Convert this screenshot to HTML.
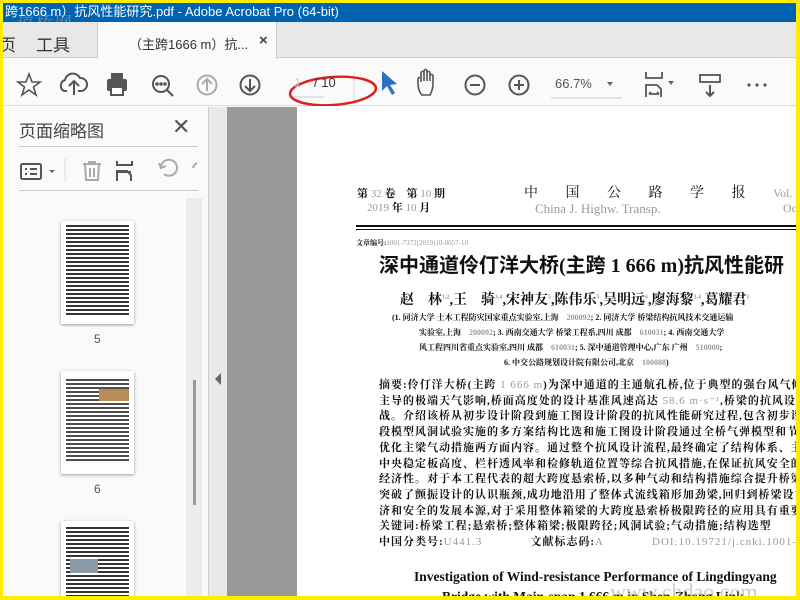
<!DOCTYPE html><html><head><meta charset="utf-8"><style>
*{margin:0;padding:0;box-sizing:border-box}
body{width:800px;height:600px;overflow:hidden;background:#ffec00;position:relative;font-family:"Liberation Sans","Noto Sans CJK SC",sans-serif}
.a{position:absolute}
.s{font-family:"Liberation Serif","Noto Serif CJK SC",serif;white-space:nowrap;color:#111}
.g{color:#999}
</style></head><body>
<div class="a" style="left:3px;top:3px;width:793px;height:593px;background:#fafafa;overflow:hidden">
<div class="a" style="left:0;top:0;width:793px;height:19px;background:#0063b1;color:#fff;font-size:13px;line-height:17px;padding-left:2px;white-space:nowrap">跨1666 m）抗风性能研究.pdf - Adobe Acrobat Pro (64-bit)</div>
<div class="a" style="left:14px;top:6px;font-size:17px;color:#8aa;opacity:.7;letter-spacing:2px;font-family:'Noto Serif CJK SC',serif">道桥网</div>
<div class="a" style="left:0;top:19px;width:793px;height:36px;background:#e8e8e8;border-bottom:1px solid #ccc"></div>
<div class="a" style="left:-4px;top:28px;font-size:17px;color:#333">页</div>
<div class="a" style="left:33px;top:28px;font-size:17px;color:#333">工具</div>
<div class="a" style="left:94px;top:19px;width:180px;height:37px;background:#fafafa;border-left:1px solid #ccc;border-right:1px solid #ccc"></div>
<div class="a" style="left:126px;top:31px;font-size:13px;color:#333;white-space:nowrap">（主跨1666 m）抗...</div>
<div class="a" style="left:256px;top:29px;font-size:15px;color:#444;font-weight:bold">×</div>
<div class="a" style="left:0;top:56px;width:793px;height:47px;background:#fafafa;border-bottom:1px solid #ddd"></div>
<svg class="a" style="left:0;top:56px" width="793" height="47" fill="none" stroke="#555" stroke-width="2">
<path d="M26 15 l3 8 h8 l-6.5 5 2.5 8 -7 -5 -7 5 2.5 -8 -6.5 -5 h8z" stroke-width="1.6"/>
<path d="M64 32 h-3 a6 6 0 0 1 1 -11 a8 8 0 0 1 15 -2 a6 6 0 0 1 1 13 h-3 M71 36 v-13 M66 27 l5 -5 5 5"/>
<rect x="104" y="20" width="20" height="12" rx="2" fill="#555" stroke="none"/><rect x="108" y="14" width="12" height="6" fill="#555" stroke="none"/><rect x="108" y="28" width="12" height="8" fill="#fff" stroke="#555"/>
<circle cx="158" cy="25" r="8"/><path d="M164 31 l6 6"/><circle cx="154" cy="25" r=".8" fill="#555"/><circle cx="158" cy="25" r=".8" fill="#555"/><circle cx="162" cy="25" r=".8" fill="#555"/>
<circle cx="204" cy="26" r="9.5" stroke="#aaa"/><path d="M204 32 v-11 M199 25 l5 -5 5 5" stroke="#aaa"/>
<circle cx="247" cy="26" r="9.5"/><path d="M247 20 v11 M242 27 l5 5 5 -5"/>
<path d="M287 38 h34" stroke="#ccc" stroke-width="1"/><path d="M351 13 v30" stroke="#ddd" stroke-width="1"/>
<path d="M379 12 l0 20 5 -5 5 9 3 -2 -5 -8 7 -1z" fill="#2d6fc4" stroke="none"/>
<path d="M419 36 c-3-3-4-8-4-12 v-4 a1.5 1.5 0 0 1 3 0 v3 v-9 a1.5 1.5 0 0 1 3 0 v8 v-10 a1.5 1.5 0 0 1 3 0 v10 v-8 a1.5 1.5 0 0 1 3 0 v8 v-5 a1.5 1.5 0 0 1 3 0 v8 c0 5-2 9-3 11z" stroke-width="1.6"/>
<circle cx="472" cy="26" r="9.5"/><path d="M467 26 h10"/>
<circle cx="516" cy="26" r="9.5"/><path d="M511 26 h10 M516 21 v10"/>
<path d="M548 39 h71" stroke="#ccc" stroke-width="1"/><path d="M604 23 h6 l-3 4z" fill="#666" stroke="none"/>
<path d="M643 13 v6 h16 v-6 M643 38 v-12 h11 l4 4 v8 M646 35 h10 M646 35 l2-2 M656 35 l-2-2" stroke-width="1.8"/><path d="M665 22 h6 l-3 4z" fill="#666" stroke="none"/>
<rect x="697" y="16" width="20" height="7" stroke-width="1.8"/><path d="M707 26 v11 M703 33 l4 4 4 -4"/>
<circle cx="746" cy="26" r="1.6" fill="#555" stroke="none"/><circle cx="754" cy="26" r="1.6" fill="#555" stroke="none"/><circle cx="762" cy="26" r="1.6" fill="#555" stroke="none"/>
<ellipse cx="330" cy="32" rx="43" ry="14" stroke="#e02020" stroke-width="2.5" transform="rotate(-4 330 32)"/>
</svg>
<div class="a" style="left:291px;top:72px;font-size:13px;color:#ccc">1</div>
<div class="a" style="left:311px;top:72px;font-size:13px;color:#333">/ 10</div>
<div class="a" style="left:552px;top:73px;font-size:13px;color:#555">66.7%</div>
<div class="a" style="left:16px;top:114px;font-size:17px;color:#444">页面缩略图</div>
<div class="a" style="left:169px;top:111px;font-size:22px;color:#555">✕</div>
<div class="a" style="left:16px;top:143px;width:179px;height:1px;background:#ccc"></div>
<div class="a" style="left:16px;top:187px;width:179px;height:1px;background:#ccc"></div>
<svg class="a" style="left:0;top:145px" width="205" height="40" fill="none" stroke="#555" stroke-width="2">
<rect x="18" y="16" width="20" height="15" rx="1.5"/><path d="M22 21 h2 M27 21 h7 M22 26 h2 M27 26 h7"/><path d="M46 22 h6 l-3 3z" fill="#666" stroke="none"/>
<path d="M62 10 v24" stroke="#ddd" stroke-width="1"/>
<path d="M80 16 h18 M86 16 v-2 h6 v2 M82 16 l1 16 h12 l1 -16 M87 20 v9 M91 20 v9" stroke="#aaa"/>
<path d="M114 13 v4 h15 v-4 M114 33 v-10 h10 l4 4 v6 M115 24 h13"/>
<path d="M161 26 a8 8 0 1 0 -3 -7 M156 15 l2 5 5-2" stroke="#aaa"/>
<path d="M190 20 a8 8 0 0 1 4 -5" stroke="#aaa"/>
</svg>
<div class="a" style="left:183px;top:195px;width:16px;height:398px;background:#ececec"></div>
<div class="a" style="left:190px;top:377px;width:3px;height:125px;background:#999"></div>
<div class="a" style="left:58px;top:218px;width:73px;height:103px;background:#fff;box-shadow:0 1px 3px #999;overflow:hidden">
 <div style="margin:4px 5px;height:90px;background:repeating-linear-gradient(#111 0 2px,#fff 2px 4px);opacity:.85"></div></div>
<div class="a" style="left:91px;top:329px;font-size:12px;color:#555">5</div>
<div class="a" style="left:58px;top:368px;width:73px;height:103px;background:#fff;box-shadow:0 1px 3px #999;overflow:hidden">
 <div style="margin:8px 5px;height:84px;background:repeating-linear-gradient(#222 0 2px,#fff 2px 4px);opacity:.8"></div>
 <div class="a" style="left:38px;top:18px;width:30px;height:12px;background:#b98b55"></div></div>
<div class="a" style="left:91px;top:479px;font-size:12px;color:#555">6</div>
<div class="a" style="left:58px;top:518px;width:73px;height:80px;background:#fff;box-shadow:0 1px 3px #999;overflow:hidden">
 <div style="margin:6px 5px;height:74px;background:repeating-linear-gradient(#111 0 2px,#fff 2px 4px);opacity:.85"></div>
 <div class="a" style="left:9px;top:38px;width:28px;height:14px;background:#8a9aa6"></div></div>
<div class="a" style="left:205px;top:104px;width:1px;height:489px;background:#ccc"></div>
<div class="a" style="left:206px;top:104px;width:18px;height:489px;background:#e9e9e9"></div>
<div class="a" style="left:212px;top:370px;width:0;height:0;border-top:6px solid transparent;border-bottom:6px solid transparent;border-right:6px solid #666"></div>
<div class="a" style="left:224px;top:104px;width:70px;height:489px;background:#999"></div>
<div class="a" style="left:294px;top:104px;width:499px;height:489px;background:#fff;overflow:hidden">
 <div class="a s" style="left:60px;top:78px;font-size:11px;font-weight:bold">第 <span class="g" style="font-weight:normal">32</span> 卷　第 <span class="g" style="font-weight:normal">10</span> 期</div>
 <div class="a s" style="left:70px;top:92px;font-size:11px;font-weight:bold"><span class="g" style="font-weight:normal">2019</span> 年 <span class="g" style="font-weight:normal">10</span> 月</div>
 <div class="a s" style="left:227px;top:75px;font-size:14px;letter-spacing:12px">中 国 公 路 学 报</div>
 <div class="a s g" style="left:238px;top:94px;font-size:13px">China J. Highw. Transp.</div>
 <div class="a s g" style="left:476px;top:79px;font-size:12px">Vol.</div>
 <div class="a s g" style="left:486px;top:94px;font-size:12px">Oc</div>
 <div class="a" style="left:59px;top:118px;width:450px;height:2px;background:#111"></div>
 <div class="a" style="left:59px;top:122px;width:450px;height:1px;background:#111"></div>
 <div class="a s" style="left:59px;top:131px;font-size:7px;font-weight:bold">文章编号:<span class="g" style="font-weight:normal">1001-7372(2019)10-0057-10</span></div>
 <div class="a s" style="left:82px;top:142px;font-size:20px;font-weight:bold;font-family:'Liberation Serif','Noto Sans CJK SC',serif">深中通道伶仃洋大桥(主跨 1 666 m)抗风性能研</div>
 <div class="a s" style="left:103px;top:182px;font-size:14px;font-weight:bold">赵　林<sup style="font-size:6px" class="g">1,2</sup>,王　骑<sup style="font-size:6px" class="g">3,4</sup>,宋神友<sup style="font-size:6px" class="g">5</sup>,陈伟乐<sup style="font-size:6px" class="g">5</sup>,吴明远<sup style="font-size:6px" class="g">6</sup>,廖海黎<sup style="font-size:6px" class="g">3,4</sup>,葛耀君<sup style="font-size:6px" class="g">1</sup></div>
 <div class="a s" style="left:95px;top:203px;font-size:8px;font-weight:bold;line-height:15px">(1. 同济大学 土木工程防灾国家重点实验室,上海　<span class="g">200092</span>; 2. 同济大学 桥梁结构抗风技术交通运输</div>
 <div class="a s" style="left:122px;top:218px;font-size:8px;font-weight:bold;line-height:15px">实验室,上海　<span class="g">200092</span>; 3. 西南交通大学 桥梁工程系,四川 成都　<span class="g">610031</span>; 4. 西南交通大学</div>
 <div class="a s" style="left:122px;top:233px;font-size:8px;font-weight:bold;line-height:15px">风工程四川省重点实验室,四川 成都　<span class="g">610031</span>; 5. 深中通道管理中心,广东 广州　<span class="g">510000</span>;</div>
 <div class="a s" style="left:207px;top:248px;font-size:8px;font-weight:bold;line-height:15px">6. 中交公路规划设计院有限公司,北京　<span class="g">100088</span>)</div>
 <div class="a s" style="left:82px;top:271px;font-size:11px;line-height:15.7px;font-weight:bold;letter-spacing:1px">
 摘要:伶仃洋大桥(主跨 <span class="g" style="font-weight:normal">1 666 m</span>)为深中通道的主通航孔桥,位于典型的强台风气候区,易受<br>
 主导的极端天气影响,桥面高度处的设计基准风速高达 <span class="g" style="font-weight:normal">58.6 m·s⁻¹</span>,桥梁的抗风设计面临极<br>
 战。介绍该桥从初步设计阶段到施工图设计阶段的抗风性能研究过程,包含初步设计阶段若<br>
 段模型风洞试验实施的多方案结构比选和施工图设计阶段通过全桥气弹模型和节段模型风洞<br>
 优化主梁气动措施两方面内容。通过整个抗风设计流程,最终确定了结构体系、主梁形式及<br>
 中央稳定板高度、栏杆透风率和检修轨道位置等综合抗风措施,在保证抗风安全的同时提高了<br>
 经济性。对于本工程代表的超大跨度悬索桥,以多种气动和结构措施综合提升桥梁的抗风稳<br>
 突破了颤振设计的认识瓶颈,成功地沿用了整体式流线箱形加劲梁,回归到桥梁设计及建造经<br>
 济和安全的发展本源,对于采用整体箱梁的大跨度悬索桥极限跨径的应用具有重要的示范意<br>
 关键词:桥梁工程;悬索桥;整体箱梁;极限跨径;风洞试验;气动措施;结构选型<br>
 中国分类号:<span class="g" style="font-weight:normal">U441.3</span>　　　　文献标志码:<span class="g" style="font-weight:normal">A</span>　　　　<span class="g" style="font-weight:normal">DOI:10.19721/j.cnki.1001-7372.2019.10.0</span></div>
 <div class="a s" style="left:117px;top:462px;font-size:13.5px;font-weight:bold">Investigation of Wind-resistance Performance of Lingdingyang</div>
 <div class="a s" style="left:145px;top:482px;font-size:13.5px;font-weight:bold">Bridge with Main-span 1 666 m in Shen-Zhong Link</div>
 <div class="a" style="left:313px;top:472px;font-size:22px;color:#aaa;opacity:.6;font-family:'Liberation Serif',serif">www.chdao.com</div>
</div>
</div>
</body></html>
